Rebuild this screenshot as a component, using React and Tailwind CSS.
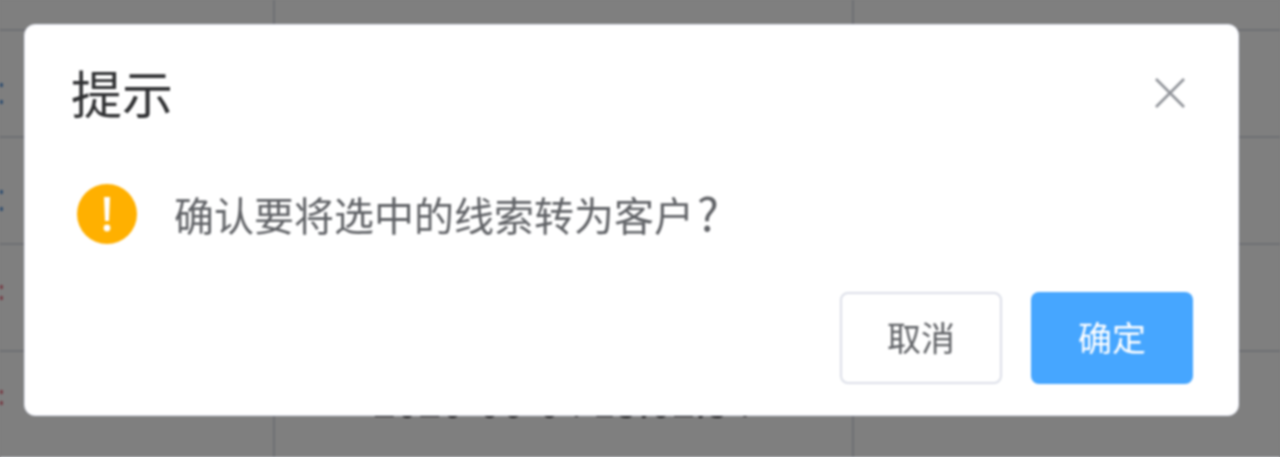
import React from 'react';

const FONT = '"Noto Sans CJK SC", "Noto Sans", sans-serif';

// rows of the table behind the dialog, only the cut-off text tails still show
const rows = [
  { dots: 'bg-[#6fa5e0]', top: 'pt-[52px]', gap: 'gap-[13px]' },
  { dots: 'bg-[#6fa5e0]', top: 'pt-[52px]', gap: 'gap-[13px]' },
  { dots: 'bg-[#ee8a98]', top: 'pt-[40px]', gap: 'gap-[7px]' },
  { dots: 'bg-[#ee8a98]', top: 'pt-[38px]', gap: 'gap-[7px]' },
];

const App = () => {
  return (
    <div className="h-[457px] w-[1280px] overflow-hidden bg-[#7f7f7f]">
      <div className="relative h-[457px] w-[1280px] bg-white blur-[0.8px]" style={{ fontFamily: FONT }}>
        <div className="grid h-[31px] grid-cols-[275px_579px_1fr] border-b-2 border-[#dcdfe6]">
          <div className="border-r-2 border-[#dcdfe6]" />
          <div className="border-r-2 border-[#dcdfe6]" />
          <div />
        </div>
        {rows.map((row, i) => (
          <div key={i} className="grid h-[107px] grid-cols-[275px_579px_1fr] border-b-2 border-[#dcdfe6]">
            <div className={`flex flex-col border-r-2 border-[#dcdfe6] ${row.top} ${row.gap}`}>
              <span className={`h-[4px] w-[3px] ${row.dots}`} />
              <span className={`h-[4px] w-[3px] ${row.dots}`} />
            </div>
            <div className="border-r-2 border-[#dcdfe6] pl-[98px]">
              {i === 3 && (
                <div className="pt-[30px] text-[41px] leading-[34px] whitespace-nowrap text-[#303133]">2020-06-04 15:02:54</div>
              )}
            </div>
            <div />
          </div>
        ))}

        <div className="absolute inset-0 bg-black/50 pt-[24px] pl-[24px]">
          <div className="relative flex h-[392px] w-[1215px] flex-col rounded-[11px] border border-[#e4e7f2] bg-white">
            <div className="pt-[36px] pl-[46px] text-[51px] leading-[62px] text-[#303133]">提示</div>
            <button className="absolute top-[52px] right-[52px] text-[#909399]">
              <svg width="32" height="32" viewBox="0 0 32 32" fill="none" stroke="currentColor" strokeWidth="2.6">
                <path d="M2 2L30 30M30 2L2 30" />
              </svg>
            </button>
            <div className="flex items-center pt-[61px] pl-[52px]">
              <svg width="60" height="60" viewBox="0 0 60 60" className="shrink-0">
                <circle cx="30" cy="30" r="30" fill="#ffb000" />
                <path d="M27 13H33L32 37H28Z" fill="#fff" />
                <circle cx="30" cy="44" r="3.4" fill="#fff" />
              </svg>
              <div className="pl-[37px] text-[40px] leading-[60px] whitespace-nowrap text-[#606266]">
                确认要将选中的线索转为客户<span className="pl-[3px] text-[46px] leading-[40px]">?</span>
              </div>
            </div>
            <div className="flex justify-end gap-[29px] pt-[48px] pr-[45px]">
              <button className="flex h-[92px] w-[162px] items-center justify-center rounded-[8px] border-2 border-[#dcdfe8] bg-white pb-[3px] text-[34px] text-[#606266]">取消</button>
              <button className="flex h-[92px] w-[162px] items-center justify-center rounded-[8px] bg-[#46a6ff] pb-[3px] text-[34px] text-white">确定</button>
            </div>
          </div>
        </div>
      </div>
    </div>
  );
};

export default App;
